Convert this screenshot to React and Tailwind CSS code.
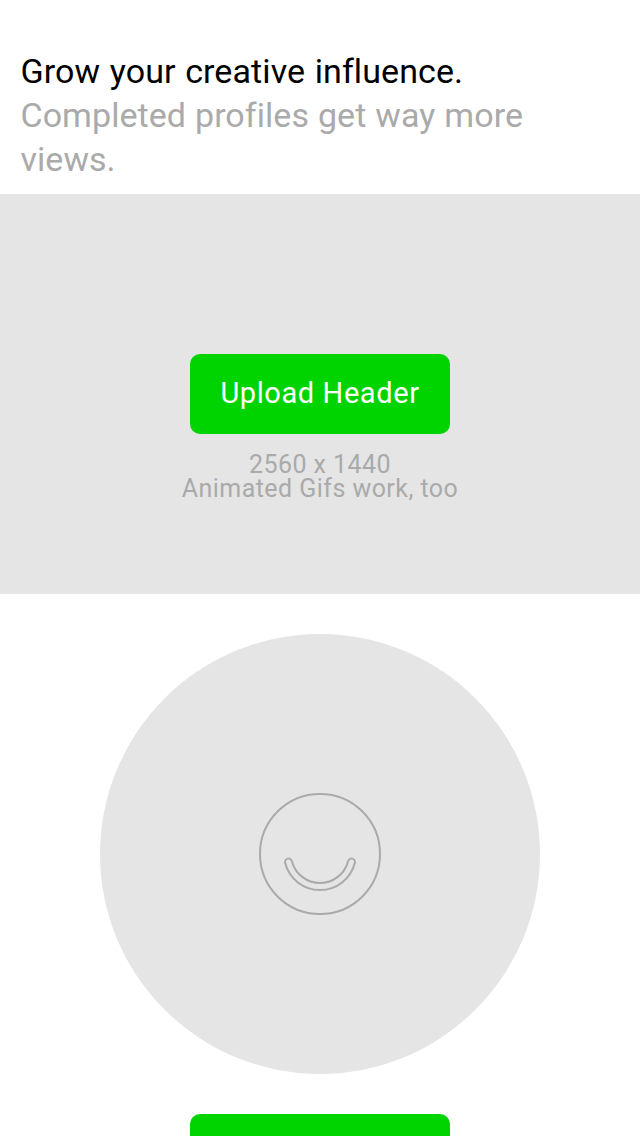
function UploadButton({ children, label }) {
  return (
    <button
      aria-label={label}
      className="flex h-20 w-[260px] shrink-0 items-center justify-center rounded-[10px] bg-[#00d400] pb-0.5 text-[29px] leading-[40px] font-normal tracking-[0.6px] whitespace-nowrap text-white"
    >
      {children}
    </button>
  );
}

function SmileLogo() {
  return (
    <svg viewBox="-62 -62 124 124" className="h-[124px] w-[124px] fill-none stroke-[#aaaaaa] stroke-2" aria-hidden="true">
      <circle r="60" />
      <path d="M-34.9 8.86A36 36 0 0 0 34.9 8.86A3.5 3.5 0 0 0 28.1 7.14A29 29 0 0 1-28.1 7.14A3.5 3.5 0 0 0-34.9 8.86Z" />
    </svg>
  );
}

export default function App() {
  return (
    <main className="flex h-[1136px] w-[640px] flex-col overflow-hidden bg-white font-['Roboto','Liberation_Sans',sans-serif] text-[#aaaaaa]">
      <header className="h-[194px] shrink-0 pt-[49px] pr-5 pl-[20.5px] text-[34px] leading-[44px] font-normal whitespace-nowrap">
        <h1 className="tracking-[0.1px] text-black [word-spacing:1px]">Grow your creative influence.</h1>
        <p className="tracking-[0.05px] [word-spacing:0.5px]">
          Completed profiles get way more
          <br />
          views.
        </p>
      </header>
      <section className="flex h-[400px] shrink-0 flex-col items-center bg-[#e5e5e5] pt-40">
        <UploadButton>Upload Header</UploadButton>
        <div className="mt-[19px] text-center text-[25px] leading-6 tracking-[0.45px] whitespace-nowrap">
          <p>2560 x 1440</p>
          <p>Animated Gifs work, too</p>
        </div>
      </section>
      <section className="flex shrink-0 flex-col items-center gap-10 pt-10">
        <div className="flex size-[440px] items-center justify-center rounded-full bg-[#e5e5e5]">
          <SmileLogo />
        </div>
        <UploadButton />
      </section>
    </main>
  );
}
